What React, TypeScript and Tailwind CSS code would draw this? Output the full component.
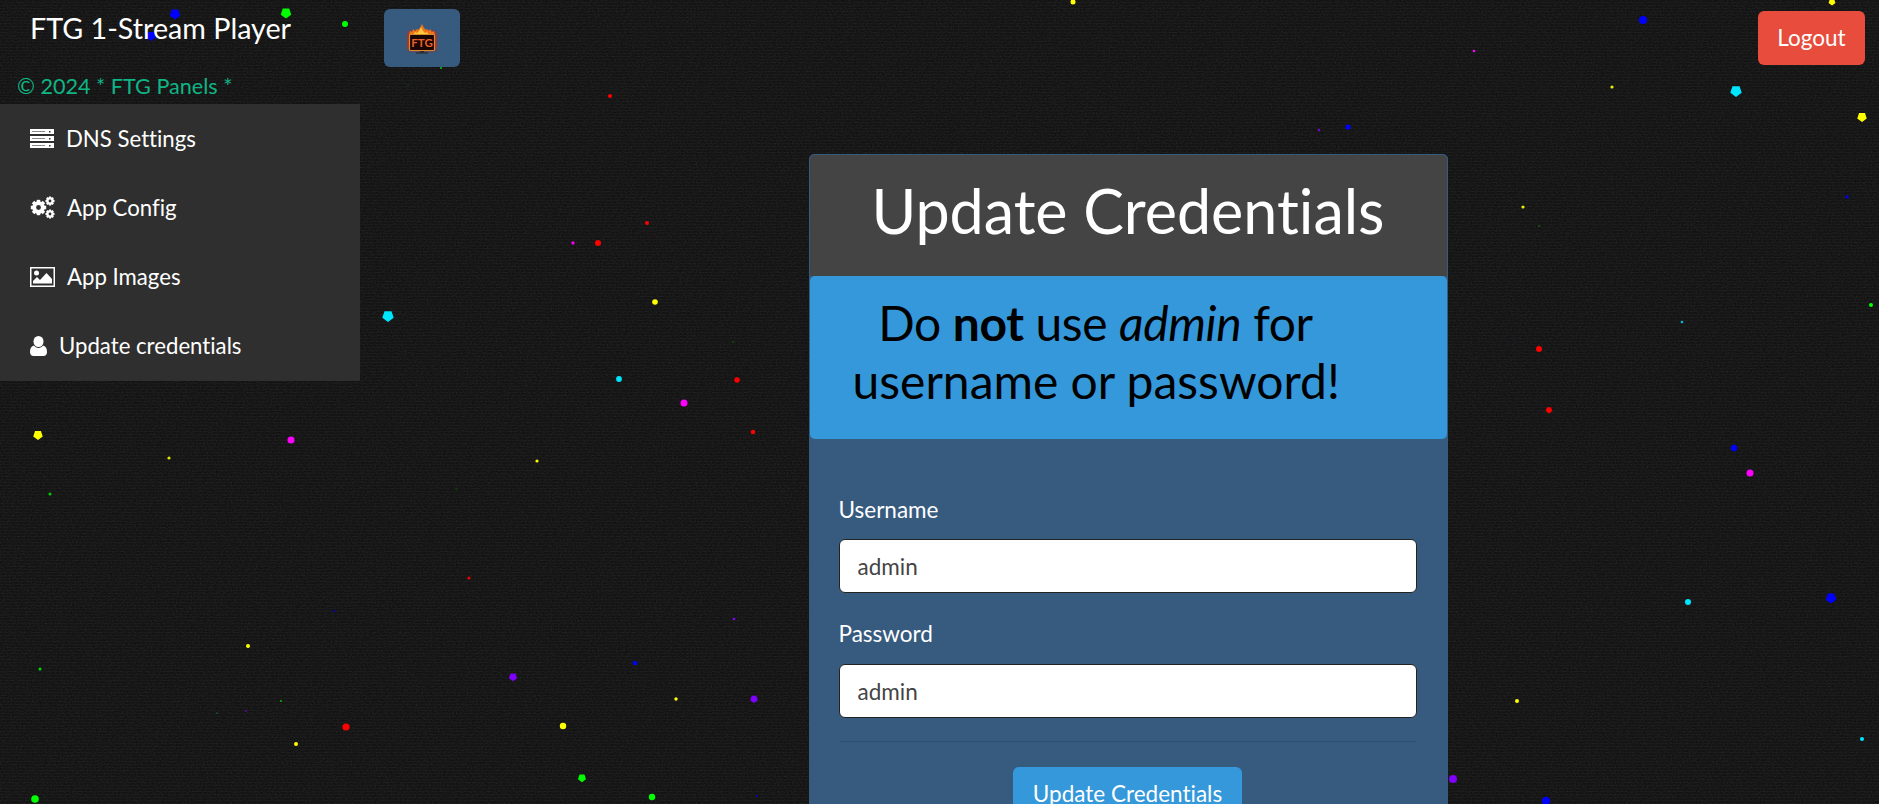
// [x, y, radius, colour, pentagon?]
type Dot = [number, number, number, string, boolean?];

const dots: Dot[] = [
    [175, 14, 5.5, "#0000ff", true],
    [151, 36, 5, "#0000ff", true],
    [286, 13, 5.5, "#00ff00", true],
    [345, 24, 3, "#00ff00"],
    [388, 316, 6, "#00e5ff", true],
    [441, 68, 1, "#00cc00"],
    [408, 85, 0.6, "#008800"],
    [38, 435, 5, "#ffff00", true],
    [291, 440, 3.5, "#ff00ff"],
    [169, 458, 1.6, "#e6e600"],
    [50, 494, 1.5, "#00cc00"],
    [334, 611, 1.1, "#0000dd"],
    [248, 646, 2, "#ffff00"],
    [40, 669, 1.5, "#00dd00"],
    [281, 701, 1, "#00bb00"],
    [217, 713, 0.6, "#11aabb"],
    [246, 711, 1, "#6600bb"],
    [346, 727, 3.6, "#ff0000"],
    [296, 744, 2, "#ffff00"],
    [35, 799, 3.8, "#00ff00"],
    [610, 96, 2, "#ff0000"],
    [647, 223, 2, "#ff0000"],
    [654, 235, 0.6, "#880000"],
    [573, 243, 1.7, "#ee00ee"],
    [598, 243, 3, "#ff0000"],
    [655, 302, 2.8, "#ffff00"],
    [733, 342, 0.8, "#007700"],
    [619, 379, 2.9, "#00e5ff"],
    [737, 380, 2.7, "#ff0000"],
    [684, 403, 3.5, "#ff00ff"],
    [753, 432, 2.3, "#ff0000"],
    [537, 461, 1.6, "#ffff00"],
    [456, 489, 0.7, "#007700"],
    [469, 578, 1.6, "#ee0000"],
    [734, 619, 1.3, "#8000ff"],
    [635, 663, 2.2, "#0000ff"],
    [513, 677, 4.3, "#8000ff", true],
    [676, 699, 1.7, "#ffff00"],
    [754, 699, 4, "#8000ff", true],
    [563, 726, 3.2, "#ffff00"],
    [582, 778, 4.2, "#00ff00", true],
    [652, 797, 3.2, "#00ff00"],
    [757, 796, 0.9, "#0000dd"],
    [1474, 51, 1.3, "#ff00ff"],
    [1643, 20, 4, "#0000ff"],
    [1832, 2, 3.6, "#ffff00", true],
    [1612, 87, 1.6, "#eeee00"],
    [1736, 91, 6, "#00e5ff", true],
    [1862, 117, 5, "#ffff00", true],
    [1847, 197, 1.8, "#0000dd"],
    [1523, 207, 1.6, "#eeee00"],
    [1539, 226, 0.8, "#009900"],
    [1871, 305, 2, "#00ff00"],
    [1682, 322, 1.3, "#00bbdd"],
    [1514, 341, 0.6, "#440088"],
    [1539, 349, 3, "#ff0000"],
    [1549, 410, 3.5, "#ff0000", true],
    [1734, 448, 3.2, "#0000ff"],
    [1750, 473, 3.5, "#ff00ff"],
    [1688, 602, 3, "#00e5ff"],
    [1831, 598, 5.5, "#0000ff", true],
    [1517, 701, 2, "#ffff00"],
    [1862, 739, 2, "#00e5ff"],
    [1453, 779, 4, "#8000ff"],
    [1546, 801, 4.2, "#0000ff"],
    [1073, 2, 2.5, "#ffff00"],
    [1319, 130, 1.3, "#8000cc"],
    [1348, 127, 2.6, "#0000ff"],
];

const pentagon = (x: number, y: number, r: number) =>
    [0, 1, 2, 3, 4]
        .map((i) => {
            const a = (Math.PI * 2 * i) / 5 + Math.PI / 2;
            return `${x + r * Math.cos(a)},${y + r * Math.sin(a)}`;
        })
        .join(" ");

function Particles() {
    return (
        <svg className="absolute inset-0 w-full h-full" width="1879" height="804">
            <filter id="weave">
                <feTurbulence type="fractalNoise" baseFrequency="0.55 0.8" numOctaves="2" seed="4" />
                <feColorMatrix values="0 0 0 0 1  0 0 0 0 1  0 0 0 0 1  0.55 0 0 0 -0.18" />
            </filter>
            <rect width="1879" height="804" filter="url(#weave)" opacity="0.2" />
            {dots.map(([x, y, r, color, isPentagon], i) =>
                isPentagon ? (
                    <polygon key={i} points={pentagon(x, y, r)} fill={color} />
                ) : (
                    <circle key={i} cx={x} cy={y} r={r} fill={color} />
                )
            )}
        </svg>
    );
}

function FtgLogo() {
    return (
        <svg width="32" height="32" viewBox="0 0 32 32">
            <filter id="glow">
                <feGaussianBlur stdDeviation="0.8" />
            </filter>
            <rect x="1.5" y="9" width="29" height="20" rx="4" fill="#e0200c" opacity="0.85" filter="url(#glow)" />
            <path
                d="M3 13l1-4 2 1 1-3 2 2 2-2 1 1 2-2 2-4 2 4 2 2 1-1 2 2 1-2 2 3 2-1 1 4z"
                fill="#f0741a"
            />
            <path d="M7 13l2-3 2 1 2-2 2-4 2 4 2 2 2-1 2 3z" fill="#ffc93a" />
            <rect x="3.5" y="12.5" width="25" height="16" rx="1" fill="#1a0605" stroke="#d98a2b" strokeWidth="1.2" />
            <text
                x="16"
                y="24.5"
                textAnchor="middle"
                fontSize="11.5"
                fontWeight="700"
                fill="#e8622a"
                fontFamily="Lato, sans-serif"
            >
                FTG
            </text>
            <rect x="14" y="29" width="4" height="1.5" fill="#2a2a2a" />
            <rect x="10" y="30.5" width="12" height="1" fill="#222222" />
        </svg>
    );
}

const ServerIcon = () => (
    <svg width="24" height="19" viewBox="0 0 24 19" fill="#fff">
        <path d="M0 0h24v5H0zM0 7h24v5H0zM0 14h24v5H0z" />
        <path d="M2 2h13v1H2zM2 9h13v1H2zM2 16h13v1H2z" fill="#8a8a8a" />
        <path d="M19 2h1.500v1.500H19zM19 9h1.500v1.500H19zM19 16h1.500v1.500H19z" fill="#2f2f2f" />
    </svg>
);

// two small cogs beside a big one
const Cog = ({ x, y, r, hole }: { x: number; y: number; r: number; hole: number }) => (
    <g>
        {[0, 45, 90, 135].map((a) => (
            <rect
                key={a}
                x={x - r * 0.28}
                y={y - r * 1.22}
                width={r * 0.56}
                height={r * 2.44}
                transform={`rotate(${a} ${x} ${y})`}
            />
        ))}
        <circle cx={x} cy={y} r={r} />
        <circle cx={x} cy={y} r={hole} fill="#2f2f2f" />
    </g>
);

const CogsIcon = () => (
    <svg width="25" height="23" viewBox="0 0 25 23" fill="#fff">
        <Cog x={8.5} y={11.5} r={6.3} hole={2.4} />
        <Cog x={20} y={5} r={3.7} hole={1.4} />
        <Cog x={20} y={18} r={3.7} hole={1.4} />
    </svg>
);

const ImageIcon = () => (
    <svg width="25" height="20" viewBox="0 0 25 20" fill="#fff">
        <path d="M0 0h25v20H0zM1.500 1.500v17h22v-17z" fillRule="evenodd" />
        <circle cx="6.500" cy="6" r="2.500" />
        <path d="M3 16.500v-2.500l4-4 3 3 6.500-7 5.500 6v4.500z" />
    </svg>
);

const UserIcon = () => (
    <svg width="17" height="20" viewBox="0 0 17 20" fill="#fff">
        <ellipse cx="8.500" cy="5.500" rx="5" ry="5.500" />
        <path d="M0 16c0-4 1.500-6 4-6.500 1 1.500 2.700 2.500 4.500 2.500s3.500-1 4.500-2.500c2.500.5 4 2.500 4 6.500 0 2.500-1.500 4-3.500 4h-10C1.500 20 0 18.500 0 16z" />
    </svg>
);

const menu = [
    { label: "DNS Settings", icon: <ServerIcon />, gap: "gap-[12px]" },
    { label: "App Config", icon: <CogsIcon />, gap: "gap-[12px]" },
    { label: "App Images", icon: <ImageIcon />, gap: "gap-[12px]" },
    { label: "Update credentials", icon: <UserIcon />, gap: "gap-[12px]" },
];

export default function App() {
    return (
        <div className="relative h-screen overflow-hidden bg-[#131313] bg-[repeating-linear-gradient(0deg,#171717_0px,#171717_1px,#121212_1px,#121212_3px)] font-[Lato,sans-serif] [font-variant-ligatures:none]">
            <Particles />

            <div className="relative">
                {/* Top bar */}
                <header className="flex items-start h-[104px]">
                    <div className="w-[384px]">
                        <h1 className="pl-[30px] pt-[9px] text-[28.7px] leading-[38px] text-white">
                            FTG 1-Stream Player
                        </h1>
                        <p className="pl-[17px] pt-[24px] text-[21.6px] leading-[30px] text-[#10b585]">
                            © 2024 * FTG Panels *
                        </p>
                    </div>
                    <button className="mt-[9px] w-[76px] h-[58px] flex items-center justify-center rounded-md bg-[#375a7f]">
                        <FtgLogo />
                    </button>
                    <button className="ml-auto mr-[14px] mt-[11px] w-[107px] h-[54px] rounded-md bg-[#e74c3c] text-[22.5px] text-white">
                        Logout
                    </button>
                </header>

                <div className="flex items-start">
                    {/* Sidebar */}
                    <nav className="w-[360px] h-[277px] flex flex-col bg-[#2f2f2f] text-white pl-[30px]">
                        {menu.map((item) => (
                            <a key={item.label} className={`h-[69px] flex items-center text-[22.2px] ${item.gap}`}>
                                {item.icon}
                                {item.label}
                            </a>
                        ))}
                    </nav>

                    {/* Credentials card */}
                    <main className="flex-1 flex justify-center pl-[17px] pt-[50px]">
                        <div className="w-[639px] rounded-[5px] border border-[#375a7f] bg-[#375a7f]">
                            <div className="h-[121px] pt-[23px] rounded-t-[5px] bg-[#444444] text-center text-[61px] leading-[66px] text-white">
                                Update Credentials
                            </div>
                            <div className="h-[163px] pt-[18px] pl-[43px] rounded-[5px] bg-[#3498db] text-black text-[48px] leading-[58px]">
                                <p className="w-[486px] text-center whitespace-nowrap">
                                    <span className="tracking-[-0.4px]">
                                        Do <b>not</b> use <i>admin</i> for
                                    </span>
                                    <br />
                                    username or password!
                                </p>
                            </div>
                            <form className="pl-[29px] pr-[30px] pt-[56px]">
                                <label className="block text-[22.5px] leading-[30px] text-white">Username</label>
                                <input
                                    defaultValue="admin"
                                    className="mt-[14px] block w-full h-[54px] px-[18px] rounded-md border border-[#222222] bg-white text-[22.5px] text-[#444444]"
                                />
                                <label className="block mt-[26px] text-[22.5px] leading-[30px] text-white">Password</label>
                                <input
                                    defaultValue="admin"
                                    className="mt-[15px] block w-full h-[54px] px-[18px] rounded-md border border-[#222222] bg-white text-[22.5px] text-[#444444]"
                                />
                                <hr className="mt-[23px] border-t border-[#2f4f72]" />
                                <div className="flex justify-center pt-[25px] pb-[20px]">
                                    <button
                                        type="button"
                                        className="w-[229px] h-[54px] rounded-md bg-[#3498db] text-[22.5px] text-white"
                                    >
                                        Update Credentials
                                    </button>
                                </div>
                            </form>
                        </div>
                    </main>
                </div>
            </div>
        </div>
    );
}
